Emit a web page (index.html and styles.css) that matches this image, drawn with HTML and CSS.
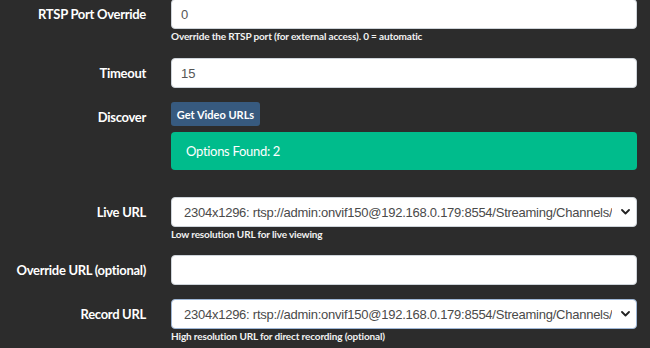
FILE: index.html
```html
<!DOCTYPE html>
<html>
<head>
<meta charset="utf-8">
<link rel="stylesheet" href="styles.css">
</head>
<body>
<form class="form">
  <div class="group first">
    <label class="label">RTSP Port Override</label>
    <div class="control"><div class="input">0</div></div>
    <div class="help">Override the RTSP port (for external access). 0 = automatic</div>
  </div>
  <div class="group">
    <label class="label">Timeout</label>
    <div class="control"><div class="input">15</div></div>
  </div>
  <div class="group discover">
    <label class="label label-top">Discover</label>
    <div class="control">
      <button type="button" class="btn">Get Video URLs</button>
      <div class="alert">Options Found: 2</div>
    </div>
  </div>
  <div class="group">
    <label class="label">Live URL</label>
    <div class="control">
      <div class="input select"><span class="val">2304x1296: rtsp://admin:onvif150@192.168.0.179:8554/Streaming/Channels/</span>
        <svg class="chev" width="9" height="6" viewBox="0 0 9 6"><path d="M1 1 L4.5 4.5 L8 1" fill="none" stroke="#222" stroke-width="1.8" stroke-linecap="round" stroke-linejoin="round"/></svg>
      </div>
    </div>
    <div class="help">Low resolution URL for live viewing</div>
  </div>
  <div class="group">
    <label class="label">Override URL (optional)</label>
    <div class="control"><div class="input"></div></div>
  </div>
  <div class="group">
    <label class="label">Record URL</label>
    <div class="control">
      <div class="input select focus"><span class="val">2304x1296: rtsp://admin:onvif150@192.168.0.179:8554/Streaming/Channels/</span>
        <svg class="chev" width="9" height="6" viewBox="0 0 9 6"><path d="M1 1 L4.5 4.5 L8 1" fill="none" stroke="#222" stroke-width="1.8" stroke-linecap="round" stroke-linejoin="round"/></svg>
      </div>
    </div>
    <div class="help">High resolution URL for direct recording (optional)</div>
  </div>
</form>
</body>
</html>
```
FILE: styles.css
```css
html, body {
  margin: 0;
  padding: 0;
  background: #2c2c2c;
  overflow: hidden;
}
body {
  font-family: Lato, "Noto Sans", sans-serif;
  color: #fff;
}
.form {
  width: 637px;
}
.group {
  display: grid;
  grid-template-columns: 146px 466px;
  column-gap: 25px;
  margin-bottom: 14px;
}
.group.first {
  margin-top: -1px;
  margin-bottom: 15px;
}
.group.discover {
  margin-bottom: 27px;
}
.label {
  grid-column: 1;
  grid-row: 1;
  align-self: center;
  text-align: right;
  font-weight: 700;
  font-size: 13px;
  letter-spacing: -0.3px;
}
.label-top {
  align-self: start;
  margin-top: 7px;
}
.control {
  grid-column: 2;
  grid-row: 1;
  min-width: 0;
}
.help {
  grid-column: 2;
  grid-row: 2;
  font-size: 10px;
  font-weight: 700;
  line-height: 14px;
  color: #f2f2f2;
  letter-spacing: -0.15px;
}
.input {
  box-sizing: border-box;
  height: 30px;
  background: #fff;
  border: 1px solid #ced4da;
  border-radius: 4px;
  padding: 0 9px;
  display: flex;
  align-items: center;
  font-family: "Liberation Sans", Arial, sans-serif;
  font-size: 13px;
  color: #555;
}
.select {
  padding: 0 6px 0 12px;
  justify-content: space-between;
  color: #4a4a4a;
}
.select .val {
  white-space: nowrap;
  overflow: hidden;
  min-width: 0;
  letter-spacing: -0.25px;
}
.select.focus {
  border-color: #9fb7d6;
}
.chev {
  flex: none;
  margin-left: 6px;
}
.btn {
  display: block;
  height: 24px;
  width: 89px;
  padding: 0;
  border: none;
  border-radius: 3px;
  background: #375a7f;
  color: #fff;
  font-family: Lato, sans-serif;
  font-size: 11px;
  font-weight: 700;
  letter-spacing: 0;
}
.alert {
  box-sizing: border-box;
  margin-top: 6px;
  height: 38px;
  border-radius: 4px;
  background: #00bc8c;
  color: #fff;
  font-size: 13px;
  letter-spacing: -0.3px;
  padding: 0 15px;
  display: flex;
  align-items: center;
}
```
